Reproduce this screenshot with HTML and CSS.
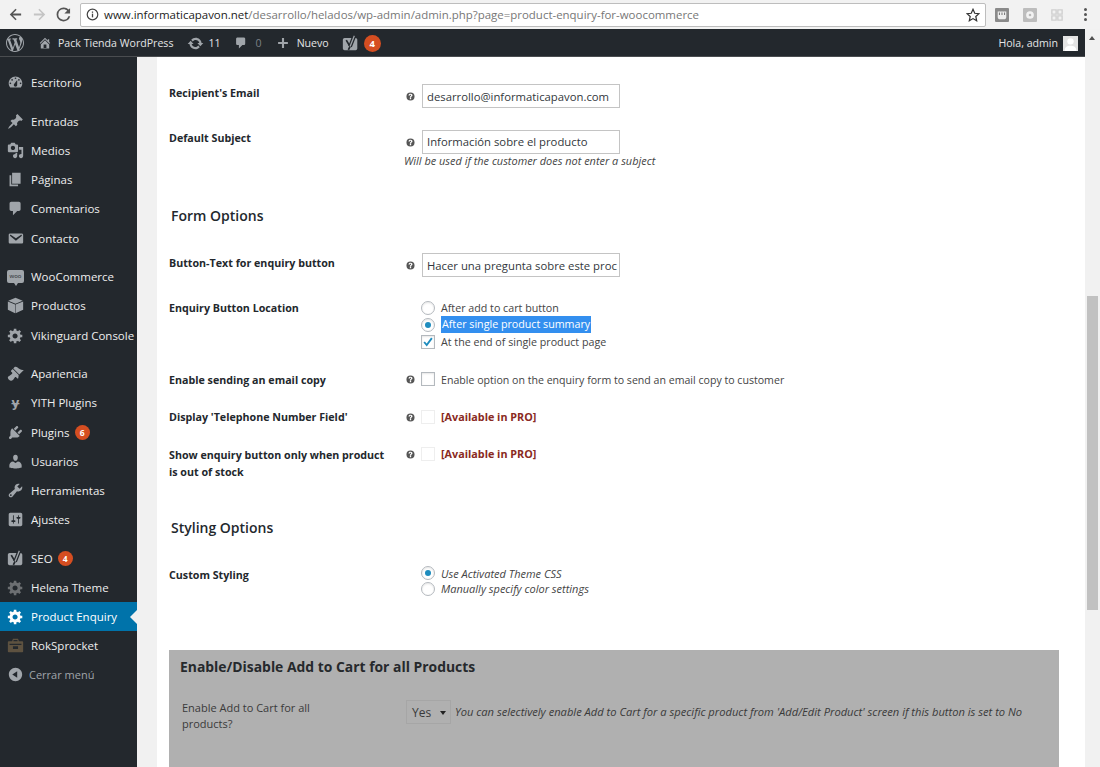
FILE: index.html
```html
<!DOCTYPE html>
<html lang="es">
<head>
<meta charset="utf-8">
<title>Product Enquiry</title>
<link rel="stylesheet" href="styles.css">
</head>
<body>
<svg class="defs" width="0" height="0" aria-hidden="true">
<symbol id="i-wp" viewBox="0 0 20 20"><path d="M20 10c0-5.51-4.49-10-10-10C4.48 0 0 4.49 0 10c0 5.52 4.48 10 10 10 5.51 0 10-4.48 10-10zM7.78 15.37L4.37 6.22c.55-.02 1.17-.08 1.17-.08.5-.06.44-1.13-.06-1.11 0 0-1.45.11-2.37.11-.18 0-.37 0-.58-.01C4.12 2.69 6.87 1.11 10 1.11c2.33 0 4.45.87 6.05 2.34-.68-.11-1.65.39-1.65 1.58 0 .74.45 1.36.9 2.1.35.61.55 1.36.55 2.46 0 1.49-1.4 5-1.4 5l-3.03-8.37c.54-.02.82-.17.82-.17.5-.05.44-1.25-.06-1.22 0 0-1.44.12-2.38.12-.87 0-2.33-.12-2.33-.12-.5-.03-.56 1.2-.06 1.22l.92.08 1.26 3.41zM17.41 10c.24-.64.74-1.87.43-4.25.7 1.29 1.05 2.71 1.05 4.25 0 3.29-1.73 6.24-4.4 7.78.97-2.59 1.94-5.2 2.92-7.78zM6.1 18.09C3.12 16.65 1.11 13.53 1.11 10c0-1.3.23-2.48.72-3.59C3.25 10.3 4.67 14.2 6.1 18.09zm4.03-6.63l2.58 6.98c-.86.29-1.76.45-2.71.45-.79 0-1.57-.11-2.29-.33.81-2.38 1.62-4.74 2.42-7.1z"/></symbol>
<symbol id="i-home" viewBox="0 0 20 20"><path d="M16 8.5l1.53 1.53-1.06 1.06L10 4.62l-6.47 6.47-1.06-1.06L10 2.5l4 4v-2h2v4zm-6-2.46l6 5.99V18H4v-5.97zM12 17v-5H8v5h4z"/></symbol>
<symbol id="i-update" viewBox="0 0 20 20"><path d="M10.2 3.28c3.53 0 6.43 2.61 6.92 6h2.08l-3.5 4-3.5-4h2.32c-.45-1.97-2.21-3.45-4.32-3.45-1.45 0-2.73.71-3.54 1.78L4.95 5.66C6.23 4.2 8.11 3.28 10.2 3.28zm-.4 13.44c-3.52 0-6.43-2.61-6.92-6H.8l3.5-4c1.17 1.33 2.33 2.67 3.5 4H5.48c.45 1.97 2.21 3.45 4.32 3.45 1.45 0 2.73-.71 3.54-1.78l1.71 1.95c-1.28 1.46-3.15 2.38-5.25 2.38z"/></symbol>
<symbol id="i-comment" viewBox="0 0 20 20"><path d="M5 2h9c1.1 0 2 .9 2 2v7c0 1.1-.9 2-2 2h-2l-5 5v-5H5c-1.1 0-2-.9-2-2V4c0-1.1.9-2 2-2z"/></symbol>
<symbol id="i-plus" viewBox="0 0 20 20"><path d="M17 8.5v3h-5.5V17h-3v-5.500H3v-3h5.500V3h3v5.500z"/></symbol>
<symbol id="i-yoast" viewBox="0 0 20 20"><path d="M3 3.500h13c1 0 2 1 2 2V16c0 1-1 2-2 2H3c-1 0-2-1-2-2V5.500c0-1 1-2 2-2z"/><path d="M5 6l4.500 7.500-2 4" fill="none" stroke="#23282d" stroke-width="2"/><path d="M9.500 13.500L14.500 1" fill="none" stroke="#23282d" stroke-width="4.500"/><path d="M9.500 13.500L14.500 1" fill="none" stroke="currentColor" stroke-width="1.500"/></symbol>
<symbol id="i-dash" viewBox="0 0 20 20"><path d="M3.76 16h12.48c1.1-1.37 1.76-3.11 1.76-5 0-4.42-3.58-8-8-8s-8 3.58-8 8c0 1.89.66 3.63 1.76 5zM10 4c.55 0 1 .45 1 1s-.45 1-1 1-1-.45-1-1 .45-1 1-1zM6 6c.55 0 1 .45 1 1s-.45 1-1 1-1-.45-1-1 .45-1 1-1zm8 0c.55 0 1 .45 1 1s-.45 1-1 1-1-.45-1-1 .45-1 1-1zm-5.370 5.550L12 7v6c0 1.100-.9 2-2 2s-2-.9-2-2c0-.57.24-1.080.63-1.450zM4 10c.55 0 1 .45 1 1s-.45 1-1 1-1-.45-1-1 .45-1 1-1zm12 0c.55 0 1 .45 1 1s-.45 1-1 1-1-.45-1-1 .45-1 1-1z"/></symbol>
<symbol id="i-pin" viewBox="0 0 20 20"><path d="M10.44 3.02l1.820-1.820 6.360 6.350-1.830 1.820c-1.050-.68-2.480-.57-3.410.36l-.75.75c-.92.93-1.040 2.350-.35 3.410l-1.830 1.820-2.410-2.410-2.800 2.790c-.42.42-3.380 2.710-3.800 2.290s1.860-3.390 2.280-3.810l2.790-2.790L4.100 9.360l1.830-1.820c1.050.69 2.480.57 3.400-.36l.75-.75c.93-.92 1.050-2.350.36-3.410z"/></symbol>
<symbol id="i-media" viewBox="0 0 20 20"><path d="M13 11V4c0-.55-.45-1-1-1h-1.670L9 1H5L3.670 3H2c-.55 0-1 .45-1 1v7c0 .55.45 1 1 1h10c.55 0 1-.45 1-1zM7 4.500c1.380 0 2.500 1.120 2.500 2.500S8.380 9.500 7 9.500 4.500 8.380 4.500 7 5.620 4.500 7 4.500zM14 6h5v10.500c0 1.380-1.120 2.500-2.500 2.500S14 17.880 14 16.500s1.120-2.500 2.500-2.500c.17 0 .34.02.5.05V9h-3V6zm-4 8.050V13h2v3.500c0 1.380-1.120 2.500-2.500 2.500S7 17.880 7 16.500 8.120 14 9.500 14c.17 0 .34.02.5.05z"/></symbol>
<symbol id="i-page" viewBox="0 0 20 20"><path d="M6 15V2h10v13H6zm-1 1h8v2H3V5h2v11z"/></symbol>
<symbol id="i-mail" viewBox="0 0 20 20"><path d="M3.870 4h13.250C18.370 4 19 4.590 19 5.790v8.420c0 1.190-.63 1.790-1.880 1.790H3.870c-1.250 0-1.880-.6-1.880-1.790V5.790c0-1.200.63-1.790 1.880-1.790zm6.620 8.600l6.740-5.530c.24-.2.43-.66.13-1.070-.29-.41-.82-.42-1.170-.17l-5.700 3.860L4.800 5.830c-.35-.25-.88-.24-1.170.17-.3.41-.11.87.13 1.070z"/></symbol>
<symbol id="i-box" viewBox="0 0 20 20"><path d="M10 1l8.500 3.500L10 8 1.500 4.500zM1 5.400l8.500 3.500V19L1 15zM19 5.400V15l-8.900 4V8.900z"/></symbol>
<symbol id="i-gear" viewBox="0 0 20 20"><path d="M18 12h-2.180c-.17.7-.44 1.350-.81 1.930l1.540 1.540-2.100 2.100-1.540-1.540c-.58.36-1.230.63-1.910.79V19H8v-2.180c-.68-.16-1.330-.43-1.910-.79l-1.540 1.540-2.120-2.120 1.540-1.540c-.36-.58-.63-1.230-.79-1.910H1V9.030h2.170c.16-.7.44-1.350.8-1.940L2.430 5.550l2.100-2.100 1.540 1.540c.58-.37 1.240-.64 1.930-.81V2h3v2.180c.68.16 1.330.43 1.910.79l1.540-1.540 2.120 2.120-1.540 1.540c.36.59.64 1.240.8 1.940H18V12zm-8.500 1.500c1.660 0 3-1.340 3-3s-1.340-3-3-3-3 1.340-3 3 1.340 3 3 3z"/></symbol>
<symbol id="i-brush" viewBox="0 0 20 20"><path d="M14.480 11.060L7.410 3.990l1.500-1.500c.5-.56 2.300-.47 3.510.32 1.210.8 1.430 1.280 2.910 2.100 1.180.64 2.450 1.260 4.450.85zm-.71.71L6.700 4.700 4.930 6.470c-.39.39-.39 1.020 0 1.410l1.060 1.060c.39.39.39 1.030 0 1.420-.6.6-1.430 1.110-2.210 1.690-.35.26-.7.53-1.010.84C1.430 13.230.91 14.100 1 15.010c.08.9.59 1.640 1.260 2.260.06.07.12.14.19.21.68.7 1.440 1.200 2.380 1.190.9-.01 1.630-.52 2.010-.9.32-.31.59-.66.84-1.010.58-.78 1.090-1.610 1.690-2.210.39-.39 1.030-.39 1.420 0l1.060 1.060c.39.39 1.020.39 1.410 0z"/></symbol>
<symbol id="i-plug" viewBox="0 0 20 20"><path d="M13.110 4.360L9.870 7.600 8 5.730l3.240-3.240c.35-.34 1.050-.2 1.560.32.52.51.66 1.210.31 1.550zm-8 1.770l.91-1.120 9.010 9.010-1.190.84c-.71.71-2.630 1.160-3.820 1.160H6.140L4.900 17.260c-.59.59-1.540.59-2.120 0-.59-.58-.59-1.530 0-2.120l1.240-1.240v-3.880c0-1.130.4-3.190 1.090-3.890zm7.260 3.970l3.240-3.240c.34-.35 1.040-.21 1.550.31.52.51.66 1.210.31 1.550l-3.240 3.250z"/></symbol>
<symbol id="i-user" viewBox="0 0 20 20"><path d="M10 9.250c-2.270 0-2.730-3.440-2.730-3.440C7 4.020 7.820 2 9.970 2c2.160 0 2.980 2.020 2.710 3.810 0 0-.41 3.440-2.680 3.440zm0 2.570L12.720 10c2.390 0 4.520 2.330 4.520 4.530v2.490s-3.650 1.130-7.240 1.130c-3.650 0-7.240-1.130-7.240-1.130v-2.490c0-2.250 1.940-4.480 4.470-4.480z"/></symbol>
<symbol id="i-tool" viewBox="0 0 20 20"><path d="M16.680 9.770c-1.340 1.340-3.300 1.670-4.950.99l-5.410 6.520c-.99.99-2.590.99-3.580 0s-.99-2.590 0-3.570l6.520-5.420c-.68-1.650-.35-3.610.99-4.950 1.280-1.280 3.120-1.620 4.720-1.060l-2.890 2.890 2.820 2.820 2.860-2.870c.53 1.580.18 3.390-1.080 4.670zM3.810 16.210c.4.39 1.040.39 1.430 0 .4-.4.4-1.040 0-1.430-.39-.4-1.030-.4-1.430 0-.39.39-.39 1.030 0 1.430z"/></symbol>
<symbol id="i-set" viewBox="0 0 20 20"><path d="M18 16V4c0-1.100-.9-2-2-2H4c-1.100 0-2 .9-2 2v12c0 1.100.9 2 2 2h12c1.100 0 2-.9 2-2zM8 11h1c.55 0 1 .45 1 1s-.45 1-1 1H8v1.500c0 .28-.22.5-.5.5s-.5-.22-.5-.5V13H6c-.55 0-1-.45-1-1s.45-1 1-1h1V5.500c0-.28.22-.5.5-.5s.5.22.5.5V11zm5-2h-1c-.55 0-1-.45-1-1s.45-1 1-1h1V5.500c0-.28.22-.5.5-.5s.5.22.5.5V7h1c.55 0 1 .45 1 1s-.45 1-1 1h-1v5.500c0 .28-.22.5-.5.5s-.5-.22-.5-.5V9z"/></symbol>
<symbol id="i-collapse" viewBox="0 0 20 20"><path d="M10 2.160c4.330 0 7.840 3.510 7.840 7.840s-3.510 7.840-7.840 7.840S2.160 14.330 2.160 10 5.710 2.160 10 2.160zm2 11.720V6.120L6.180 9.970z"/></symbol>
<symbol id="i-help" viewBox="0 0 20 20"><path fill-rule="evenodd" d="M10 1a9 9 0 1 0 0 18 9 9 0 0 0 0-18zm1.500 15h-3v-3h3zm2.700-7.700c-.3.900-1 1.400-1.700 1.900-.7.500-1 .8-1 1.800h-3c0-1.800.7-2.600 1.600-3.300.6-.4 1.200-.8 1.200-1.500 0-.6-.5-1-1.300-1-.9 0-1.400.6-1.500 1.500h-3C5.600 5.500 7.500 4 10 4c3 0 5 1.900 4.200 4.300z"/></symbol>
<symbol id="i-bag" viewBox="0 0 20 20"><path d="M7 2h6l1 3h4c.6 0 1 .4 1 1v11c0 .6-.4 1-1 1H2c-.6 0-1-.4-1-1V6c0-.6.4-1 1-1h4zm.8 1.500L7.500 5h5l-.3-1.500zM3 8v1.500h14V8zm4 3v3h6v-3z"/></symbol>
</svg>

<header class="chrome">
  <svg class="nav-ic" viewBox="0 0 16 16"><path d="M14 7H5.200l4-4L8 1.900 1.900 8 8 14.100l1.200-1.100-4-4H14z"/></svg>
  <svg class="nav-ic nav-off" viewBox="0 0 16 16"><path d="M2 7h8.800l-4-4L8 1.900 14.100 8 8 14.100 6.800 13l4-4H2z"/></svg>
  <svg class="nav-ic" viewBox="0 0 16 16"><path d="M13.500 2.700A7.400 7.400 0 0 0 8 .6a7.400 7.400 0 1 0 7.200 9.200h-2A5.500 5.500 0 1 1 8 2.500c1.500 0 2.900.6 3.900 1.600L8.900 7H15V1.200z"/></svg>
  <div class="omnibox">
    <svg class="info" viewBox="0 0 16 16"><circle cx="8" cy="8" r="6.500" fill="none" stroke="#444" stroke-width="1.500"/><rect x="7.200" y="7" width="1.600" height="4.500" fill="#444"/><rect x="7.200" y="4.300" width="1.600" height="1.600" fill="#444"/></svg>
    <span class="url"><b>www.informaticapavon.net</b>/desarrollo/helados/wp-admin/admin.php?page=product-enquiry-for-woocommerce</span>
    <svg class="star" viewBox="0 0 16 16"><path d="M8 1.500l2 4.500 4.800.5-3.600 3.200 1 4.800L8 12.100l-4.200 2.400 1-4.800L1.200 6.500 6 6z" fill="none" stroke="#333" stroke-width="1.400"/></svg>
  </div>
  <span class="ext ext-dark"><svg viewBox="0 0 14 14"><path d="M2 3h10v6a3 3 0 0 1-3 3H5a3 3 0 0 1-3-3z" fill="#eee"/><path d="M4 4v3M10 4v3M7 4v3" stroke="#777" stroke-width="1.200"/></svg></span>
  <span class="ext ext-mid"><svg viewBox="0 0 14 14"><circle cx="7" cy="7" r="4.500" fill="#f2f2f2"/><circle cx="7" cy="7" r="1.500" fill="#b9b9b9"/></svg></span>
  <span class="ext ext-light"><svg viewBox="0 0 14 14"><path d="M1 1h5v5H1zM8 1h5v5H8zM1 8h5v5H1zM8 8h5v5H8z" fill="none" stroke="#d0d0d0" stroke-width="1.600"/></svg></span>
  <span class="dots"><i></i><i></i><i></i></span>
</header>

<div class="viewport">
  <div class="page">
    <nav class="adminbar">
      <svg class="ab-wp"><use href="#i-wp"/></svg>
      <span class="ab-item ab-site"><svg class="ab-ic"><use href="#i-home"/></svg>Pack Tienda WordPress</span>
      <span class="ab-item ab-updates"><svg class="ab-ic ab-ic-big"><use href="#i-update"/></svg>11</span>
      <span class="ab-item ab-muted"><svg class="ab-ic"><use href="#i-comment"/></svg>0</span>
      <span class="ab-item ab-new"><svg class="ab-ic"><use href="#i-plus"/></svg>Nuevo</span>
      <span class="ab-item"><svg class="ab-ic ab-ic-big"><use href="#i-yoast"/></svg><span class="badge badge-lg">4</span></span>
      <span class="ab-user">Hola, admin<span class="avatar"><svg viewBox="0 0 14 14"><rect width="14" height="14" fill="#e4e4e4"/><circle cx="7" cy="5" r="3" fill="#fff"/><path d="M1.500 14c0-4 2.500-5 5.500-5s5.500 1 5.500 5z" fill="#fff"/></svg></span></span>
    </nav>
    <div class="wpbody">
      <aside class="sidebar">
        <ul class="menu">
          <li class="gap-first"><svg class="m-ic"><use href="#i-dash"/></svg>Escritorio</li>
          <li class="sep"><svg class="m-ic"><use href="#i-pin"/></svg>Entradas</li>
          <li><svg class="m-ic"><use href="#i-media"/></svg>Medios</li>
          <li><svg class="m-ic"><use href="#i-page"/></svg>Páginas</li>
          <li><svg class="m-ic"><use href="#i-comment"/></svg>Comentarios</li>
          <li><svg class="m-ic"><use href="#i-mail"/></svg>Contacto</li>
          <li class="sep"><span class="woo">woo</span>WooCommerce</li>
          <li><svg class="m-ic"><use href="#i-box"/></svg>Productos</li>
          <li><svg class="m-ic"><use href="#i-gear"/></svg>Vikinguard Console</li>
          <li class="sep"><svg class="m-ic"><use href="#i-brush"/></svg>Apariencia</li>
          <li><span class="yith">ɏ</span>YITH Plugins</li>
          <li><svg class="m-ic"><use href="#i-plug"/></svg>Plugins<span class="badge">6</span></li>
          <li><svg class="m-ic"><use href="#i-user"/></svg>Usuarios</li>
          <li><svg class="m-ic"><use href="#i-tool"/></svg>Herramientas</li>
          <li><svg class="m-ic"><use href="#i-set"/></svg>Ajustes</li>
          <li class="sep"><svg class="m-ic"><use href="#i-yoast"/></svg>SEO<span class="badge">4</span></li>
          <li><svg class="m-ic m-ic-dim"><use href="#i-gear"/></svg>Helena Theme</li>
          <li class="current"><svg class="m-ic"><use href="#i-gear"/></svg>Product Enquiry</li>
          <li><svg class="m-ic m-ic-brown"><use href="#i-bag"/></svg>RokSprocket</li>
          <li class="collapse"><svg class="m-ic"><use href="#i-collapse"/></svg>Cerrar menú</li>
        </ul>
      </aside>
      <main class="content">
        <div class="form">
          <div class="row row-email">
            <div class="label">Recipient's Email</div>
            <svg class="help"><use href="#i-help"/></svg>
            <div class="text-input">desarrollo@informaticapavon.com</div>
          </div>
          <div class="row row-subject">
            <div class="label">Default Subject</div>
            <svg class="help"><use href="#i-help"/></svg>
            <div class="text-input">Información sobre el producto</div>
          </div>
          <p class="hint">Will be used if the customer does not enter a subject</p>
          <h2 class="section form-options">Form Options</h2>
          <div class="row row-button">
            <div class="label">Button-Text for enquiry button</div>
            <svg class="help"><use href="#i-help"/></svg>
            <div class="text-input">Hacer una pregunta sobre este proc</div>
          </div>
          <div class="row row-location">
            <div class="label">Enquiry Button Location</div>
            <div class="help-spacer"></div>
            <div class="options">
              <div class="opt"><span class="radio"></span>After add to cart button</div>
              <div class="opt"><span class="radio on"></span><span class="selected">After single product summary</span></div>
              <div class="opt"><span class="check on"><svg viewBox="0 0 14 14"><path d="M2.500 7l3 3.500L11.500 2.500" fill="none" stroke="#1e8cbe" stroke-width="2.200"/></svg></span>At the end of single product page</div>
            </div>
          </div>
          <div class="row row-copy">
            <div class="label">Enable sending an email copy</div>
            <svg class="help"><use href="#i-help"/></svg>
            <span class="check"></span><span class="opt-text">Enable option on the enquiry form to send an email copy to customer</span>
          </div>
          <div class="row row-phone">
            <div class="label">Display 'Telephone Number Field'</div>
            <svg class="help"><use href="#i-help"/></svg>
            <span class="check check-off"></span><span class="pro">[Available in PRO]</span>
          </div>
          <div class="row row-stock">
            <div class="label label-wrap">Show enquiry button only when product is out of stock</div>
            <svg class="help"><use href="#i-help"/></svg>
            <span class="check check-off"></span><span class="pro">[Available in PRO]</span>
          </div>
          <h2 class="section styling">Styling Options</h2>
          <div class="row row-styling">
            <div class="label">Custom Styling</div>
            <div class="help-spacer"></div>
            <div class="options options-it">
              <div class="opt"><span class="radio on"></span>Use Activated Theme CSS</div>
              <div class="opt"><span class="radio"></span>Manually specify color settings</div>
            </div>
          </div>
        </div>
        <section class="panel">
          <h3>Enable/Disable Add to Cart for all Products</h3>
          <div class="panel-row">
            <div class="panel-label">Enable Add to Cart for all products?</div>
            <div class="select">Yes<span class="caret"></span></div>
            <em>You can selectively enable Add to Cart for a specific product from 'Add/Edit Product' screen if this button is set to No</em>
          </div>
        </section>
      </main>
    </div>
  </div>
  <div class="scrollbar">
    <span class="sb-up"></span>
    <div class="sb-thumb"></div>
  </div>
</div>
</body>
</html>
```
FILE: styles.css
```css
* { box-sizing: border-box; }
html, body { margin: 0; height: 767px; overflow: hidden; }
body { font-family: "Open Sans", sans-serif; font-size: 11.500px; color: #444; background: #fff; }
.defs { position: absolute; }
svg { display: block; fill: currentColor; }

.chrome { height: 29px; background: #f2f2f2; display: flex; align-items: center; padding-left: 8px; color: #555; }
.nav-ic { width: 15px; height: 15px; margin-right: 9px; flex: none; }
.nav-off { color: #c4c4c4; }
.omnibox { width: 906px; height: 24px; background: #fff; border: 1px solid #bdbdbd; border-radius: 2px; display: flex; align-items: center; padding: 0 5px 0 5px; }
.info { width: 13px; height: 13px; margin-right: 5px; flex: none; }
.url { font-size: 11.460px; color: #777; white-space: nowrap; flex: 1; }
.url b { font-weight: 400; color: #222; }
.star { width: 14px; height: 14px; flex: none; }
.ext { width: 14px; height: 14px; display: block; flex: none; padding: 1px; border-radius: 1px; }
.ext-dark { margin-left: 9px; background: #8a8a8a; }
.ext-mid { margin-left: 14px; background: #bdbdbd; }
.ext-light { margin-left: 13px; }
.dots { margin-left: 20px; display: flex; flex-direction: column; gap: 2px; }
.dots i { width: 3px; height: 3px; background: #555; border-radius: 50%; display: block; }

.viewport { display: flex; height: 738px; }
.page { width: 1085px; flex: none; }
.adminbar { height: 28px; background: #23282d; border-bottom: 1px solid #4a4d50; display: flex; align-items: center; color: #e4e5e6; font-size: 10.600px; padding: 1px 7px 0 6px; }
.ab-wp { width: 18px; height: 18px; color: #a0a5aa; margin-right: 14px; }
.ab-item { display: flex; align-items: center; margin-right: 13px; gap: 5px; }
.ab-site { gap: 6px; margin-right: 14px; }
.ab-updates { gap: 4px; margin-right: 13px; }
.ab-new { gap: 7px; }
.ab-ic { width: 14px; height: 14px; color: #a0a5aa; }
.ab-ic-big { width: 17px; height: 17px; }
.ab-muted { color: #7d8287; margin-right: 14px; gap: 8px; }
.ab-user { margin-left: auto; display: flex; align-items: center; gap: 5px; }
.avatar { width: 15px; height: 15px; display: block; }

.wpbody { display: flex; height: 710px; }
.sidebar { width: 137px; flex: none; background: #23282d; color: #eee; font-size: 11.500px; }
.menu { list-style: none; margin: 0; padding: 0; }
.menu li { height: 29.200px; display: flex; align-items: center; padding-left: 7px; white-space: nowrap; position: relative; }
.menu .gap-first { margin-top: 11.200px; }
.menu .sep { margin-top: 9.400px; }
.m-ic { width: 17px; height: 17px; color: #a0a5aa; margin-right: 7px; flex: none; }
.m-ic-dim { color: #6c6f72; }
.m-ic-brown { color: #5e5240; }
.woo { width: 17px; height: 13px; background: #a0a5aa; color: #23282d; border-radius: 2px; font-size: 6px; line-height: 13px; text-align: center; margin-right: 7px; flex: none; position: relative; }
.woo::after { content: ""; position: absolute; left: 7px; bottom: -3px; border: 2px solid transparent; border-bottom-width: 0; border-top: 3px solid #a0a5aa; }
.yith { width: 17px; margin-right: 7px; color: #a0a5aa; font-family: "DejaVu Sans", sans-serif; font-weight: 700; font-size: 12px; line-height: 16px; text-align: center; flex: none; }
.menu .current { background: #0073aa; color: #fff; }
.current .m-ic { color: #fff; }
.current::after { content: ""; position: absolute; right: 0; top: 50%; margin-top: -7px; border: 7px solid transparent; border-left-width: 0; border-right-color: #f1f1f1; }
.menu .collapse { color: #a0a5aa; font-size: 11px; }
.collapse .m-ic { margin-right: 5px; }
.badge { width: 15px; height: 15px; border-radius: 50%; background: #d54e21; color: #fff; font-size: 8.500px; font-weight: 700; line-height: 15px; text-align: center; margin-left: 5px; }
.badge-lg { width: 17px; height: 17px; line-height: 17px; font-size: 9.500px; margin-left: 0; }

.content { width: 948px; flex: none; background: #fff; border-left: 20px solid #f1f1f1; padding-left: 12px; overflow: hidden; }
.form { height: 593px; padding-top: 27px; }
.row { display: flex; align-items: flex-start; color: #444; }
.label { width: 237px; flex: none; font-weight: 700; color: #23282d; font-size: 10.700px; line-height: 17px; padding-top: 1px; }
.label-wrap { padding-right: 20px; }
.help { width: 9px; height: 9px; color: #555; margin-top: 6px; margin-right: 7px; flex: none; }
.help-spacer { width: 15px; flex: none; }
.text-input { width: 198px; height: 24px; border: 1px solid #c4c4c4; font-size: 11.300px; line-height: 23px; padding-left: 4px; color: #32373c; white-space: nowrap; overflow: hidden; }
.row-email .help, .row-subject .help, .row-button .help { margin-top: 8px; }
.row-subject { margin-top: 22px; }
.row-subject .label { margin-top: -1px; }
.row-subject .text-input { line-height: 21px; }
.hint { margin: -1px 0 0 235px; font-style: italic; font-size: 10.950px; line-height: 16px; color: #444; }
.section { margin: 0; color: #23282d; font-size: 14px; font-weight: 600; line-height: 20px; padding-left: 2px; }
.form-options { margin-top: 37px; }
.row-button { margin-top: 27px; }
.row-button .label { padding-top: 2px; }
.row-location { margin-top: 22px; }
.opt { display: flex; align-items: center; height: 17px; font-size: 10.700px; white-space: nowrap; }
.options-it .opt { font-style: italic; font-size: 11px; height: 15.500px; }
.radio, .check { width: 14px; height: 14px; border: 1px solid #b4b9be; flex: none; margin-right: 6px; background: #fff; display: block; box-shadow: inset 0 1px 2px rgba(0,0,0,.1); }
.radio { border-radius: 50%; position: relative; }
.radio.on::after { content: ""; position: absolute; left: 3px; top: 3px; width: 6px; height: 6px; border-radius: 50%; background: #1e8cbe; }
.selected { background: #338fef; color: #fff; padding: 0 1px; line-height: 17px; }
.row-copy { margin-top: 22px; }
.opt-text { font-size: 10.600px; line-height: 17px; }
.check-off { border-color: #eeeeee; box-shadow: none; }
.row-phone { margin-top: 21px; }
.row-stock { margin-top: 21px; }
.row-copy .help, .row-phone .help, .row-stock .help { margin-top: 3px; margin-right: 6px; }
.row-copy .label { margin-top: -1px; }
.row-phone .label { padding-top: 0; margin-top: -1px; }
.row-stock .label { padding-top: 0; }
.pro { color: #8a2a22; font-weight: 700; font-size: 10.800px; line-height: 14px; }
.styling { margin-top: 37px; }
.row-styling { margin-top: 27.500px; }

.panel { width: 890px; height: 117px; background: #b0b0b0; padding: 0 11px; color: #3a3a3a; }
.panel h3 { margin: 0; padding-top: 7px; font-size: 13.900px; line-height: 20px; font-weight: 700; color: #26292c; }
.panel-row { display: flex; align-items: flex-start; margin-top: 23px; padding-left: 2px; }
.panel-label { width: 224px; flex: none; font-size: 11px; line-height: 15.500px; padding-right: 70px; }
.select { width: 45px; height: 24px; border: 1px solid #a6a6a6; font-size: 12px; line-height: 24px; padding-left: 5px; position: relative; flex: none; margin-right: 4px; }
.caret { position: absolute; right: 4px; top: 10px; border: 3px solid transparent; border-bottom-width: 0; border-top: 4px solid #222; }
.panel-row em { font-size: 11.150px; line-height: 16px; margin-top: 4px; white-space: nowrap; }

.scrollbar { width: 15px; flex: none; background: #f1f1f1; padding: 0 2px; }
.sb-up { display: block; width: 0; height: 0; margin: 7px 0 0 2px; border: 3px solid transparent; border-top-width: 0; border-bottom: 4px solid #505050; }
.sb-thumb { height: 314px; background: #c1c1c1; margin-top: 256px; }
```
